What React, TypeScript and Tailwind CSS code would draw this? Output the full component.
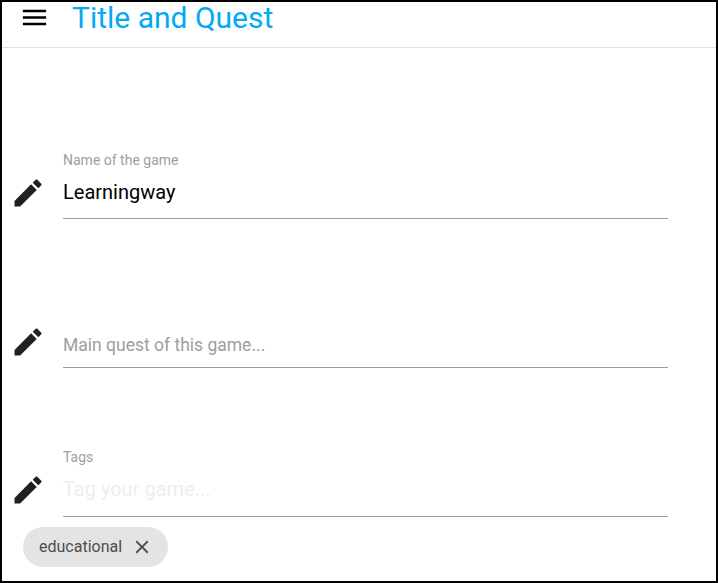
import React from "react";

function PencilIcon() {
  return (
    <svg className="size-[36px] shrink-0 text-[#212121]" viewBox="0 0 24 24" fill="currentColor">
      <path d="M3 17.25V21h3.75L17.81 9.94l-3.75-3.75L3 17.25zM20.71 7.04c.39-.39.39-1.02 0-1.41l-2.34-2.34c-.39-.39-1.02-.39-1.41 0l-1.83 1.83 3.75 3.75 1.83-1.83z" />
    </svg>
  );
}

function Field({
  label,
  labelClass,
  iconClass,
  value,
  valueClass,
  className,
}: {
  label?: string;
  labelClass: string;
  iconClass: string;
  value: string;
  valueClass: string;
  className: string;
}) {
  return (
    <div className={`flex items-end ${className}`}>
      <div className={`w-[61px] flex justify-start pl-[8px] ${iconClass}`}>
        <PencilIcon />
      </div>
      <div className="w-[605px] h-[72px] flex flex-col border-b border-[#9e9e9e]">
        <div className={`h-[27px] text-[14px] leading-[16px] text-[#a39e9c] ${labelClass}`}>{label}</div>
        <div className={`leading-[28px] ${valueClass}`}>{value}</div>
      </div>
    </div>
  );
}

export default function App() {
  return (
    <div className="w-[718px] h-[583px] border-2 border-black bg-white overflow-hidden font-['Roboto',sans-serif]">
      <header className="h-[46px] flex items-start border-b border-[#e0e0e0]">
        <svg className="ml-[17px] size-[31px] text-black" viewBox="0 0 24 24" fill="currentColor">
          <path d="M3 18h18v-2H3v2zm0-5h18v-2H3v2zm0-7v2h18V6H3z" />
        </svg>
        <h1 className="ml-[22px] text-[30px] leading-[32px] text-[#03a9f4]">Title and Quest</h1>
      </header>
      <Field
        className="mt-[99px]"
        label="Name of the game"
        labelClass="pt-[5px]"
        iconClass="pb-[8px]"
        value="Learningway"
        valueClass="text-[20px] pt-[4px] text-black"
      />
      <Field
        className="mt-[77px]"
        labelClass="pt-[5px]"
        iconClass="pb-[8px]"
        value="Main quest of this game..."
        valueClass="text-[17.5px] pt-[8px] text-[#9e9e9e]"
      />
      <Field
        className="mt-[77px]"
        label="Tags"
        labelClass="pt-[4px]"
        iconClass="pb-[9px]"
        value="Tag your game..."
        valueClass="text-[20px] pt-[3px] text-[#eeeeee]"
      />
      <div className="ml-[21px] mt-[10px] w-[145px] h-[40px] rounded-full bg-[#e4e4e4] flex items-center pl-[16px] text-[#4d4d4d]">
        <span className="text-[16px] leading-[20px]">educational</span>
        <svg className="ml-[9px] size-[22px]" viewBox="0 0 24 24" fill="currentColor">
          <path d="M19 6.41 17.59 5 12 10.59 6.41 5 5 6.41 10.59 12 5 17.59 6.41 19 12 13.41 17.59 19 19 17.59 13.41 12z" />
        </svg>
      </div>
    </div>
  );
}
